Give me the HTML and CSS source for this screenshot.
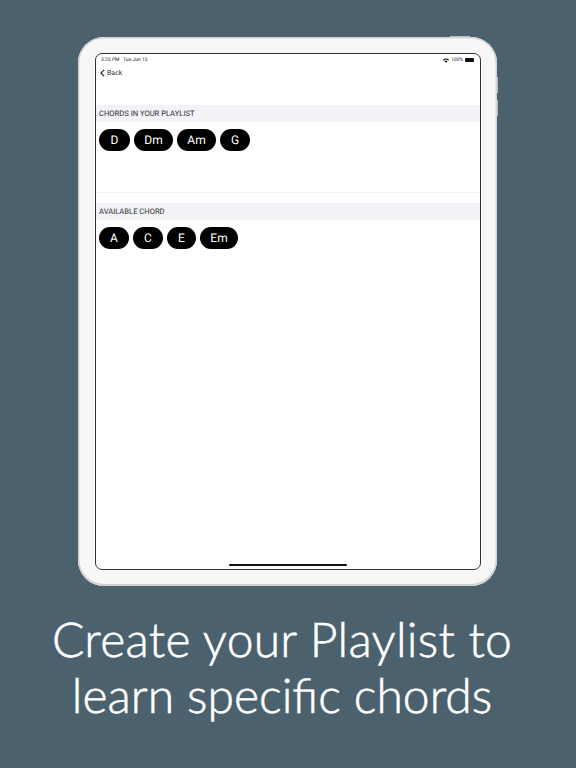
FILE: index.html
```html
<!DOCTYPE html>
<html lang="en">
<head>
    <meta charset="UTF-8"><title>Create your Playlist</title>
    <link rel="stylesheet" href="styles.css">
</head>
<body>
<div class="tablet">
    <div class="sideButton topButton"></div>
    <div class="sideButton volumeUp"></div>
    <div class="sideButton volumeDown"></div>
    <div class="screen">
        <div class="statusBar">
            <span>3:23 PM&nbsp;&nbsp;&nbsp;Tue Jun 15</span>
            <div class="statusRight">
                <svg class="wifi" viewBox="0 0 12 9" width="6" height="5">
                    <path d="M0 3 A8.5 8.5 0 0 1 12 3 L10.3 4.8 A6 6 0 0 0 1.7 4.8 Z M2.9 6 A4.3 4.3 0 0 1 9.1 6 L6 9 Z" fill="#111"/>
                </svg>
                <span>100%</span>
                <div class="battery"></div>
            </div>
        </div>
        <div class="navBar">
            <svg class="backIcon" viewBox="0 0 6 10" width="5" height="8">
                <path d="M5 1 L1 5 L5 9" fill="none" stroke="#222" stroke-width="1.4"/>
            </svg>
            <span>Back</span>
        </div>
        <div class="sectionHeader">CHORDS IN YOUR PLAYLIST</div>
        <div class="chipRow playlistRow">
            <div class="chip wideD">D</div>
            <div class="chip wideDm">Dm</div>
            <div class="chip wideAm">Am</div>
            <div class="chip wideG">G</div>
        </div>
        <div class="sectionHeader">AVAILABLE CHORD</div>
        <div class="chipRow">
            <div class="chip wideA">A</div>
            <div class="chip wideC">C</div>
            <div class="chip wideE">E</div>
            <div class="chip wideEm">Em</div>
        </div>
        <div class="homeIndicator"></div>
    </div>
</div>
<div class="caption">
    <div class="captionFirst">Create your Playlist to</div>
    <div>learn specific chords</div>
</div>
</body>
</html>
```
FILE: styles.css
```css
html {
    font-family: Roboto, "Liberation Sans", sans-serif;
    text-rendering: geometricPrecision;
}
body {
    margin: 0;
    width: 576px;
    height: 768px;
    overflow: hidden;
    background-color: #4b626e;
    display: flex;
    flex-direction: column;
    align-items: flex-start;
}
.tablet {
    position: relative;
    box-sizing: border-box;
    width: 419px;
    height: 549px;
    margin: 37px 0 0 78px;
    padding: 16px 16px 15px 17px;
    border-radius: 26px;
    background-color: #f7f7f7;
    box-shadow: inset 0 0 0 1.5px #d4d4d4, inset 0 -1px 0 1px #c9c9c9;
}
.sideButton {
    position: absolute;
    background-color: #b9bfc2;
}
.topButton {
    top: -1px;
    left: 372px;
    width: 20px;
    height: 1px;
}
.volumeUp {
    top: 40px;
    right: -1px;
    width: 1px;
    height: 16px;
}
.volumeDown {
    top: 63px;
    right: -1px;
    width: 1px;
    height: 16px;
}
.screen {
    position: relative;
    box-sizing: border-box;
    width: 386px;
    height: 517px;
    border: 1px solid #333;
    border-radius: 7px;
    background-color: #fff;
    display: flex;
    flex-direction: column;
    overflow: hidden;
}
.statusBar {
    display: flex;
    justify-content: space-between;
    align-items: center;
    height: 10px;
    margin-top: 1px;
    padding: 0 6px 0 5px;
    font-size: 5px;
    color: #222;
}
.statusRight {
    display: flex;
    align-items: center;
    gap: 2px;
}
.battery {
    width: 9px;
    height: 4px;
    border-radius: 1px;
    background-color: #111;
}
.navBar {
    display: flex;
    align-items: center;
    gap: 2px;
    height: 15px;
    padding-left: 4px;
    font-size: 7px;
    color: #333;
}
.sectionHeader {
    height: 17px;
    line-height: 17px;
    padding-left: 3px;
    font-size: 7.6px;
    color: #2c2c2c;
    background-color: #f2f2f7;
}
.navBar + .sectionHeader {
    margin-top: 25px;
}
.chipRow {
    display: flex;
    gap: 4px;
    padding: 7px 0 0 3px;
}
.playlistRow {
    box-sizing: border-box;
    height: 71px;
    margin-bottom: 10px;
    border-bottom: 1px solid #f1f1f1;
}
.chip {
    height: 22px;
    line-height: 22px;
    border-radius: 11px;
    text-align: center;
    font-size: 12px;
    color: #fff;
    background-color: #000;
}
.wideD { width: 31px; }
.wideDm { width: 39px; }
.wideAm { width: 39px; }
.wideG { width: 30px; }
.wideA { width: 30px; }
.wideC { width: 30px; }
.wideE { width: 29px; }
.wideEm { width: 38px; }
.homeIndicator {
    position: absolute;
    left: 133px;
    bottom: 3px;
    width: 118px;
    height: 2px;
    border-radius: 1px;
    background-color: #111;
}
.caption {
    box-sizing: border-box;
    width: 100%;
    margin-top: 26px;
    padding-right: 12px;
    text-align: center;
    font-family: Lato, sans-serif;
    font-weight: 300;
    font-size: 48px;
    line-height: 56px;
    -webkit-text-stroke: 0.6px #fff;
    color: #fff;
}
.captionFirst {
    letter-spacing: 0.27px;
}
```
